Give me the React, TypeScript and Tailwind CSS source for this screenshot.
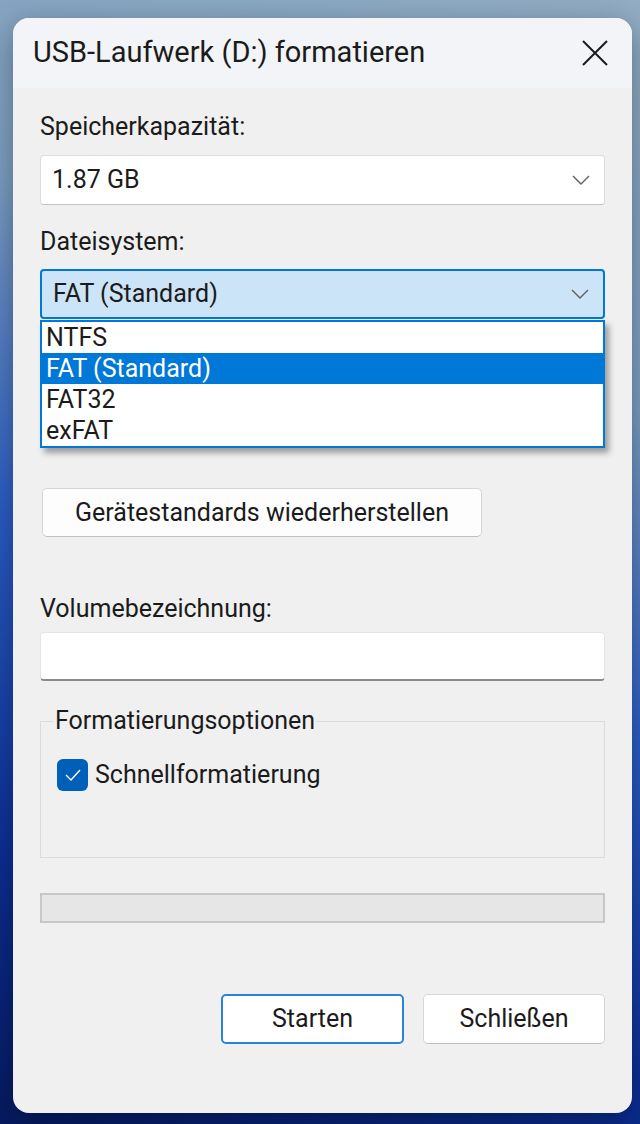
import React from "react";

function Chevron() {
  return (
    <svg width="18" height="10" viewBox="0 0 18 10" fill="none">
      <polyline points="1,1 9,9 17,1" stroke="#5f5f5f" strokeWidth="1.4" />
    </svg>
  );
}

function Combo({ value, active }: { value: string; active?: boolean }) {
  return (
    <div
      className={`flex h-[50px] items-center justify-between rounded-[4px] pl-[11px] pr-[14px] ${
        active
          ? "border-2 border-[#0078d7] bg-[#cce4f7]"
          : "border border-[#dcdcdc] border-b-[#c4c4c4] bg-white"
      }`}
    >
      <span>{value}</span>
      <Chevron />
    </div>
  );
}

const fileSystems = ["NTFS", "FAT (Standard)", "FAT32", "exFAT"];

export default function App() {
  return (
    <div className="h-[1124px] w-[640px] overflow-hidden bg-[linear-gradient(200deg,#92adc4_0%,#7d9fc2_30%,#2a5cc6_55%,#0c2f95_80%,#061a60_100%)] pt-[18px] pl-[13px] font-['Roboto','Liberation_Sans',sans-serif] text-[25px] text-[#1b1b1b]">
      <div className="relative flex h-[1095px] w-[619px] flex-col overflow-hidden rounded-[16px] bg-[#f0f0f0] shadow-[0_8px_30px_rgba(0,0,0,0.35)]">
        {/* title bar */}
        <div className="flex h-[70px] shrink-0 items-center justify-between bg-[#f2f4f7] pl-[20px] pr-[24px]">
          <span className="text-[29px]">USB-Laufwerk (D:) formatieren</span>
          <svg width="26" height="26" viewBox="0 0 26 26">
            <path d="M1 1 L25 25 M25 1 L1 25" stroke="#1b1b1b" strokeWidth="2" />
          </svg>
        </div>

        <div className="flex flex-col px-[27px]">
          <div className="mt-[24px] h-[30px] leading-[30px]">Speicherkapazität:</div>
          <div className="mt-[13px]">
            <Combo value="1.87 GB" />
          </div>

          <div className="mt-[22px] h-[30px] leading-[30px]">Dateisystem:</div>
          <div className="relative mt-[12px]">
            <Combo value="FAT (Standard)" active />
            <div className="absolute left-0 right-0 top-[51px] z-10 border-2 border-[#0078d7] bg-white shadow-[4px_5px_6px_rgba(0,0,0,0.35)]">
              {fileSystems.map((fs) => (
                <div
                  key={fs}
                  className={`h-[31px] pl-[4px] leading-[31px] ${
                    fs === "FAT (Standard)" ? "bg-[#0078d7] text-white" : ""
                  }`}
                >
                  {fs}
                </div>
              ))}
            </div>
          </div>

          <div className="h-[169px]" />

          <button
            type="button"
            className="ml-[2px] h-[49px] w-[440px] rounded-[5px] border border-[#d6d6d6] border-b-[#c0c0c0] bg-[#fdfdfd] text-center"
          >
            Gerätestandards wiederherstellen
          </button>

          <div className="mt-[57px] h-[30px] leading-[30px]">Volumebezeichnung:</div>
          <div className="mt-[8px] h-[49px] rounded-[4px] border border-[#e4e4e4] border-b-2 border-b-[#8a8a8a] bg-white" />

          <fieldset className="mt-[27px] h-[150px] border border-[#dcdcdc] px-[16px] pt-[22px]">
            <legend className="-ml-[3px] px-[1px] leading-[26px]">Formatierungsoptionen</legend>
            <div className="flex items-center gap-[7px]">
              <div className="flex h-[32px] w-[31px] items-center justify-center rounded-[6px] bg-[#005fb8]">
                <svg width="16" height="12" viewBox="0 0 16 12" fill="none">
                  <polyline points="1,6 6,11 15,1" stroke="white" strokeWidth="1.4" />
                </svg>
              </div>
              <span>Schnellformatierung</span>
            </div>
          </fieldset>

          <div className="mt-[35px] h-[30px] border-2 border-[#c8c8c8] bg-[#e6e6e6]" />

          <div className="mt-[71px] flex justify-end gap-[19px]">
            <button
              type="button"
              className="h-[50px] w-[183px] rounded-[5px] border-2 border-[#2a83d6] bg-white"
            >
              Starten
            </button>
            <button
              type="button"
              className="h-[50px] w-[182px] rounded-[5px] border border-[#d6d6d6] border-b-[#c0c0c0] bg-white"
            >
              Schließen
            </button>
          </div>
        </div>
      </div>
    </div>
  );
}
